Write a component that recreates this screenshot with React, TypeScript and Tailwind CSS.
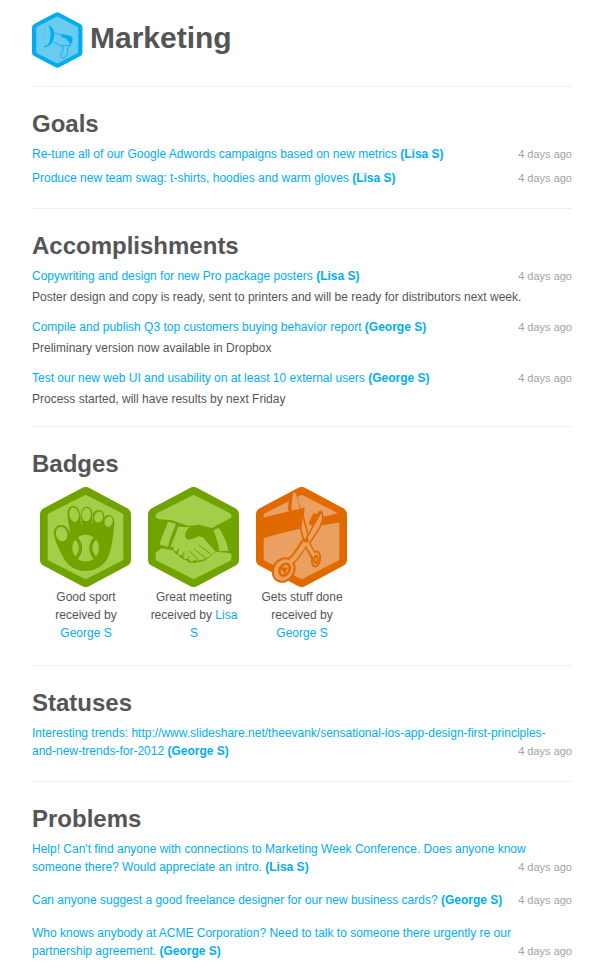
import React from 'react';

type Item = { text: string; tail?: string; author: string; note?: string };

const goals: Item[] = [
    { text: 'Re-tune all of our Google Adwords campaigns based on new metrics', author: 'Lisa S' },
    { text: 'Produce new team swag: t-shirts, hoodies and warm gloves', author: 'Lisa S' },
];

const accomplishments: Item[] = [
    {
        text: 'Copywriting and design for new Pro package posters',
        author: 'Lisa S',
        note: 'Poster design and copy is ready, sent to printers and will be ready for distributors next week.',
    },
    {
        text: 'Compile and publish Q3 top customers buying behavior report',
        author: 'George S',
        note: 'Preliminary version now available in Dropbox',
    },
    {
        text: 'Test our new web UI and usability on at least 10 external users',
        author: 'George S',
        note: 'Process started, will have results by next Friday',
    },
];

// tail is the end of a long link that stays on one line
const statuses: Item[] = [
    {
        text: 'Interesting trends: http://www.slideshare.net/theevank/sensational-ios-app-design-first-principles-',
        tail: 'and-new-trends-for-2012',
        author: 'George S',
    },
];

const problems: Item[] = [
    {
        text: "Help! Can't find anyone with connections to Marketing Week Conference. Does anyone know someone there? Would appreciate an intro.",
        author: 'Lisa S',
    },
    { text: 'Can anyone suggest a good freelance designer for our new business cards?', author: 'George S' },
    {
        text: 'Who knows anybody at ACME Corporation? Need to talk to someone there urgently re our partnership agreement.',
        author: 'George S',
    },
];

function Hexagon({ dark, light }: { dark: string; light: string }) {
    return (
        <g strokeLinejoin="round">
            <path d="M137 21 L252 82 V218 L137 279 L21 218 V82 Z" fill={dark} stroke={dark} strokeWidth="42" />
            <path d="M137 31 L243 85 V215 L137 269 L30 215 V85 Z" fill={light} stroke={light} strokeWidth="14" />
        </g>
    );
}

function TeamIcon() {
    return (
        <svg viewBox="0 0 276 300" className="h-14 w-[51px]" aria-hidden="true">
            <Hexagon dark="#00aeef" light="#6acbf0" />
            <path d="M86 70 C118 78 130 112 113 153 C106 174 92 187 68 190 L65 182 C84 180 91 174 95 158 C103 127 106 96 86 70 Z" fill="#00aeef" />
            <path d="M83 74 C66 88 58 116 60 150" fill="none" stroke="#00aeef" strokeWidth="2" strokeOpacity="0.5" />
            <path d="M120 112 L164 123 M113 160 L154 180" fill="none" stroke="#00aeef" strokeWidth="4" />
            <path d="M159 118 L204 126 C224 134 223 156 212 172 L207 180 C205 160 190 144 160 134 Z" fill="#00aeef" />
            <path d="M154 180 L207 180 M164 183 L169 205 L153 237 C160 249 173 250 181 245 L195 213 L191 196 L204 184" fill="none" stroke="#00aeef" strokeWidth="5" />
        </svg>
    );
}

function GloveBadge() {
    return (
        <svg viewBox="0 0 276 300" className="h-[100px] w-[92px]" aria-hidden="true">
            <Hexagon dark="#70a300" light="#a2ce49" />
            <g transform="translate(-30 -21)">
                <path
                    d="M72 164 C70 145 81 134 94 135 C108 136 116 147 121 161 C120 145 112 120 112 101 C112 84 121 77 132 78 C145 79 149 94 151 112 C152 92 158 80 170 80 C182 81 188 91 188 105 C191 94 199 89 208 90 C219 91 224 102 223 113 C228 105 236 103 244 108 C254 114 254 125 252 143 C249 170 245 207 235 230 C221 259 195 273 164 273 C135 272 113 258 101 234 C89 211 75 185 72 164 Z"
                    fill="#70a300"
                />
                <g fill="#a2ce49">
                    <ellipse cx="95" cy="162" rx="17" ry="22" transform="rotate(-15 95 162)" />
                    <ellipse cx="132" cy="104" rx="14" ry="22" transform="rotate(-10 132 104)" />
                    <ellipse cx="169" cy="104" rx="14" ry="20" transform="rotate(5 169 104)" />
                    <ellipse cx="206" cy="111" rx="13" ry="17" transform="rotate(12 206 111)" />
                    <ellipse cx="236" cy="125" rx="12" ry="16" transform="rotate(16 236 125)" />
                    <circle cx="167" cy="204" r="40" />
                </g>
                <path d="M135 171 C157 190 157 217 135 237 M199 171 C177 190 177 217 199 237" fill="none" stroke="#70a300" strokeWidth="10" />
                <path d="M152 112 L155 135 M188 107 L186 130" stroke="#a2ce49" strokeWidth="2" />
            </g>
        </svg>
    );
}

function HandshakeBadge() {
    return (
        <svg viewBox="0 0 276 300" className="h-[100px] w-[92px]" aria-hidden="true">
            <Hexagon dark="#70a300" light="#a2ce49" />
            <path d="M12 88 L34 97 L72 100 L122 117 L152 113 L192 123 L248 93 L262 88 V206 L242 198 L204 194 L168 222 L138 228 L104 216 L76 190 L40 184 L22 198 L12 212 Z" fill="#70a300" />
            <g fill="#a2ce49">
                <path d="M60 104 L84 111 C75 134 65 158 60 179 L35 173 C40 150 52 126 60 104 Z" />
                <path d="M90 119 L126 121 C112 130 108 145 115 155 C127 163 142 151 152 148 L167 152 C178 169 194 181 202 193 L192 204 L178 211 L162 219 L142 221 L120 208 L92 188 L68 178 C75 158 85 139 90 119 Z" />
                <path d="M197 129 L213 122 C225 144 238 165 241 191 L214 193 C212 170 203 151 197 129 Z" />
            </g>
            <path d="M74 182 C76 199 86 201 92 203 C97 216 109 215 116 220 C124 232 135 226 141 222 C132 217 129 207 119 207 C112 203 110 196 102 195 C96 189 91 182 82 178 Z" fill="#70a300" />
            <g fill="#a2ce49">
                <ellipse cx="84" cy="184" rx="7" ry="9" transform="rotate(30 84 184)" />
                <ellipse cx="98" cy="196" rx="8" ry="9" transform="rotate(25 98 196)" />
                <ellipse cx="114" cy="207" rx="8" ry="9" transform="rotate(25 114 207)" />
                <ellipse cx="130" cy="216" rx="8" ry="7" transform="rotate(25 130 216)" />
            </g>
            <path d="M124 193 L150 217 M138 186 L170 211 M153 174 L190 203" fill="none" stroke="#70a300" strokeWidth="3" strokeLinecap="round" />
        </svg>
    );
}

function ScissorsBadge() {
    return (
        <svg viewBox="0 0 276 300" className="h-[100px] w-[92px]" aria-hidden="true">
            <Hexagon dark="#e06900" light="#e9a060" />
            <path d="M14 94 L100 73 L146 61 L143 97 L133 118 L132 125 L75 139 L14 156 Z" fill="#e06900" />
            <path d="M186 94 L258 76 V105 L180 118 Z" fill="#e06900" />
            <path d="M96 70 L98 40 L112 10 L124 24 L133 64 L104 74 Z" fill="#e06900" />
            <path d="M107 71 C106 47 109 28 114 13 C123 25 129 43 130 66 Z" fill="#e9a060" />
            <path d="M158 108 L172 79 L183 81 L189 72 L200 74 L188 104 L168 118 Z" fill="#e06900" />
            {/* outline of both blades and handles, then the lighter metal over it */}
            <g fill="none" stroke="#e06900" strokeLinecap="round">
                <path d="M150 163 C136 178 128 200 108 219" strokeWidth="24" />
                <path d="M150 163 C157 178 163 190 171 204" strokeWidth="20" />
            </g>
            <ellipse cx="83" cy="249" rx="31" ry="37" transform="rotate(32 83 249)" fill="#e9a060" stroke="#e06900" strokeWidth="6" />
            <ellipse cx="180" cy="216" rx="12" ry="23" transform="rotate(8 180 216)" fill="#e9a060" stroke="#e06900" strokeWidth="6" />
            <path d="M139 76 C145 105 153 130 160 158 L146 172 L134 125 Z" fill="#e9a060" stroke="#e06900" strokeWidth="5" />
            <path d="M196 74 C205 88 201 104 190 124 L158 173 L147 162 C162 135 180 100 196 74 Z" fill="#e9a060" stroke="#e06900" strokeWidth="5" />
            <g fill="none" stroke="#e9a060" strokeLinecap="round">
                <path d="M150 165 C137 181 128 203 106 222" strokeWidth="14" />
                <path d="M151 165 C157 179 164 191 173 204" strokeWidth="11" />
            </g>
            <ellipse cx="86" cy="248" rx="14" ry="19" transform="rotate(32 86 248)" fill="#e9a060" stroke="#e06900" strokeWidth="8" />
            <path d="M72 240 L96 242 L86 262 Z" fill="#e06900" />
            <ellipse cx="180" cy="217" rx="5" ry="11" fill="#e9a060" stroke="#e06900" strokeWidth="6" />
            <circle cx="151" cy="160" r="7" fill="#e06900" />
        </svg>
    );
}

const badges = [
    { title: 'Good sport', person: 'George S', Icon: GloveBadge },
    { title: 'Great meeting', person: 'Lisa S', Icon: HandshakeBadge },
    { title: 'Gets stuff done', person: 'George S', Icon: ScissorsBadge },
];

function Section({ title, children }: { title: string; children: React.ReactNode }) {
    return (
        <section className="mt-[18px] border-t border-[#eee] pt-[19px]">
            <h2 className="text-2xl leading-9 font-bold">{title}</h2>
            {children}
        </section>
    );
}

function ItemList({ items, spaced = false }: { items: Item[]; spaced?: boolean }) {
    return (
        <ul className={spaced ? 'flex flex-col gap-[9px]' : 'flex flex-col'}>
            {items.map((item) => (
                <li key={item.text} className={item.note ? 'flow-root pt-[3px]' : 'flow-root py-[3px]'}>
                    <a href="#" className="text-[#00aeef] hover:underline">
                        {item.text}
                        {item.tail && <span className="whitespace-nowrap">{item.tail}</span>} <strong>({item.author})</strong>
                    </a>
                    <time className="float-right text-[11px] text-[#a3a3a3]">4 days ago</time>
                    {item.note && <p className="mt-[3px] mb-[3px] last:mb-0">{item.note}</p>}
                </li>
            ))}
        </ul>
    );
}

export default function App() {
    return (
        <main className="bg-white pt-3 pr-7 pb-3 pl-8 font-['Liberation_Sans',Arial,sans-serif] text-xs leading-[18px] text-[#555]">
            <header className="flex items-center gap-[7px]">
                <TeamIcon />
                <h1 className="pb-1 text-[30px] leading-9 font-bold">Marketing</h1>
            </header>

            <Section title="Goals">
                <ItemList items={goals} />
            </Section>

            <Section title="Accomplishments">
                <ItemList items={accomplishments} spaced />
            </Section>

            <Section title="Badges">
                <ul className="flex flex-wrap gap-4 px-2 py-[5px]">
                    {badges.map(({ title, person, Icon }) => (
                        <li key={title} className="w-[92px] text-center">
                            <Icon />
                            <p className="pt-px">
                                {title} received by{' '}
                                <a href="#" className="text-[#00aeef] hover:underline">
                                    {person}
                                </a>
                            </p>
                        </li>
                    ))}
                </ul>
            </Section>

            <Section title="Statuses">
                <ItemList items={statuses} spaced />
            </Section>

            <Section title="Problems">
                <ItemList items={problems} spaced />
            </Section>
        </main>
    );
}
